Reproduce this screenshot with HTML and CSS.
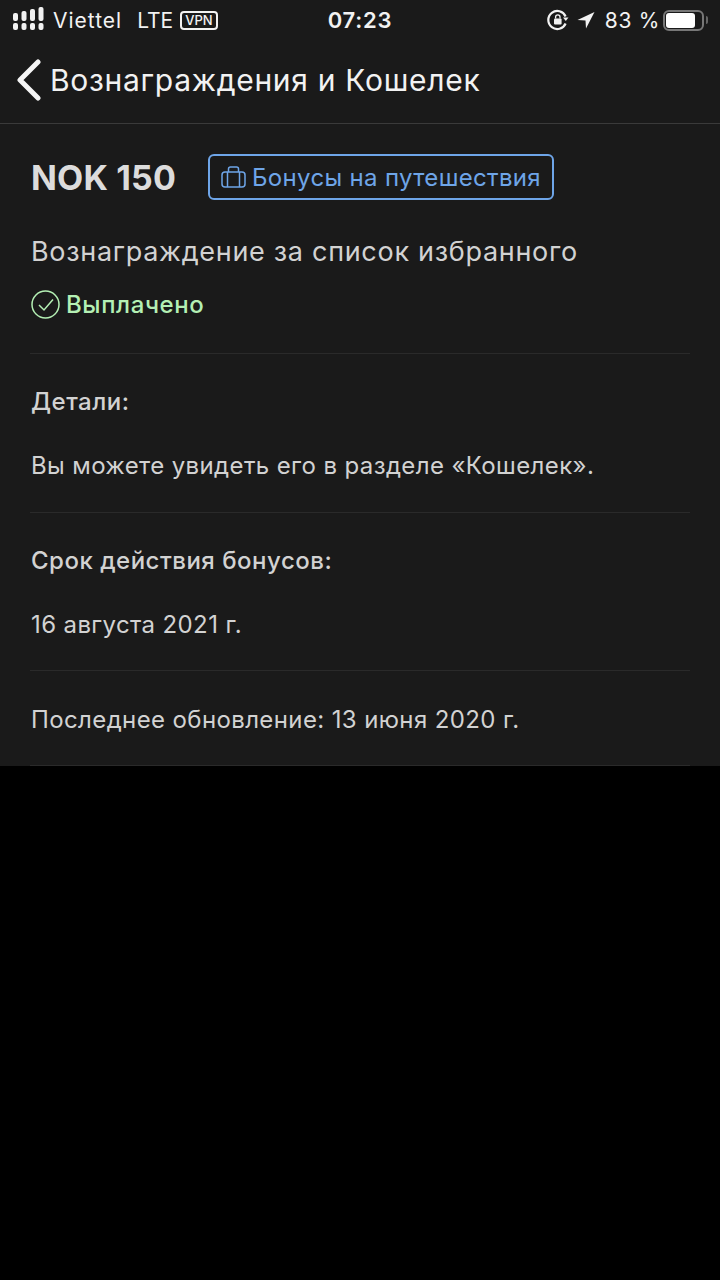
FILE: index.html
```html
<!DOCTYPE html>
<html lang="ru">
<head>
  <meta charset="UTF-8">
  <title>Вознаграждения и Кошелек</title>
  <link rel="stylesheet" href="styles.css">
</head>
<body>
  <div class="screen">
    <div class="status-bar">
      <div class="status-left">
        <svg class="signal" width="34" height="26" viewBox="0 0 34 26" fill="#f2f2f2">
          <rect x="1" y="6" width="5" height="8" rx="2"/>
          <rect x="9.500" y="4" width="5" height="10" rx="2"/>
          <rect x="18" y="2" width="5" height="12" rx="2"/>
          <rect x="26.500" y="0" width="5" height="14" rx="2"/>
          <rect x="1" y="16" width="5" height="7" rx="2"/>
          <rect x="9.500" y="16" width="5" height="7" rx="2"/>
          <rect x="18" y="16" width="5" height="7" rx="2"/>
          <rect x="26.500" y="16" width="5" height="7" rx="2"/>
        </svg>
        <span class="carrier">Viettel</span>
        <span class="network">LTE</span>
        <span class="vpn">VPN</span>
      </div>
      <div class="status-time">07:23</div>
      <div class="status-right">
        <svg width="22" height="22" viewBox="0 0 22 22" fill="none">
          <path d="M18.6 7.5A9 9 0 1 0 18.6 14.5" stroke="#f2f2f2" stroke-width="2.2"/>
          <path d="M16 8.5h5.5l-2.7 3.5z" fill="#f2f2f2"/>
          <rect x="7" y="9.5" width="7.6" height="6" rx="1" fill="#f2f2f2"/>
          <path d="M8.6 9.5V8a2.2 2.2 0 0 1 4.4 0v1.500" stroke="#f2f2f2" stroke-width="1.300"/>
        </svg>
        <svg class="arrow" width="18" height="20" viewBox="0 0 18 20">
          <path d="M17.500 2 .5 10l8 .5.500 8z" fill="#f2f2f2"/>
        </svg>
        <span class="percent">83 %</span>
        <div class="battery"><div class="battery-level"></div></div>
        <div class="battery-tip"></div>
      </div>
    </div>

    <div class="nav-bar">
      <svg class="back" width="26" height="42" viewBox="0 0 26 42" fill="none">
        <path d="M22 3 4 21l18 18" stroke="#f5f5f5" stroke-width="5" stroke-linecap="round" stroke-linejoin="round"/>
      </svg>
      <h1 class="nav-title">Вознаграждения и Кошелек</h1>
    </div>

    <div class="content">
      <section class="section section-head">
        <div class="amount-row">
          <span class="amount">NOK 150</span>
          <span class="tag">
            <svg width="25" height="22" viewBox="0 0 25 22" fill="none" stroke="#6ea5e8" stroke-width="1.500">
              <rect x="1" y="6" width="23" height="15" rx="3"/>
              <path d="M7.500 6V3A2 2 0 0 1 9.500 1h6a2 2 0 0 1 2 2v3M6.500 6v15M18.500 6v15"/>
            </svg>
            Бонусы на путешествия
          </span>
        </div>
        <div class="reward-name">Вознаграждение за список избранного</div>
        <div class="paid">
          <svg width="29" height="29" viewBox="0 0 29 29" fill="none" stroke="#b4f0b4" stroke-width="1.500">
            <circle cx="14.500" cy="14.500" r="13.500"/>
            <path d="m8 15 5 5 9-10.500"/>
          </svg>
          Выплачено
        </div>
      </section>

      <section class="section section-details">
        <div class="label">Детали:</div>
        <div class="value">Вы можете увидеть его в разделе «Кошелек».</div>
      </section>

      <section class="section">
        <div class="label">Срок действия бонусов:</div>
        <div class="value">16 августа 2021 г.</div>
      </section>

      <section class="section section-last">
        <div class="value">Последнее обновление: 13 июня 2020 г.</div>
      </section>
    </div>
  </div>
</body>
</html>
```

FILE: styles.css
```css
* { box-sizing: border-box; }
html, body { margin: 0; padding: 0; background: #000; }
body {
  font-family: Inter, "Noto Sans", sans-serif;
  width: 720px;
  height: 1280px;
  overflow: hidden;
}

.screen { background: #1a1a1a; }

.status-bar {
  height: 40px;
  display: grid;
  grid-template-columns: 1fr auto 1fr;
  align-items: center;
  padding: 0 12px;
  color: #f2f2f2;
  font-size: 21px;
}
.status-left, .status-right { display: flex; align-items: center; }
.status-right { justify-content: flex-end; }
.signal { margin-right: 7px; }
.carrier { letter-spacing: 1px; }
.network { margin-left: 15px; }
.vpn {
  margin-left: 7px;
  border: 2px solid #f2f2f2;
  border-radius: 4px;
  font-size: 13px;
  font-weight: 500;
  line-height: 15px;
  padding: 0 3px;
}
.status-time { font-weight: 600; font-size: 22px; letter-spacing: .8px; }
.arrow { margin-left: 8px; }
.percent { margin-left: 10px; letter-spacing: .7px; }
.battery {
  margin-left: 3px;
  width: 41px;
  height: 21px;
  border: 2px solid #777;
  border-radius: 6px;
  padding: 1px;
}
.battery-level { width: 29px; height: 100%; background: #fff; border-radius: 3px; }
.battery-tip {
  width: 2px;
  height: 8px;
  margin-left: 2px;
  background: #666;
  border-radius: 0 2px 2px 0;
}

.nav-bar {
  height: 84px;
  display: flex;
  align-items: center;
  padding: 0 0 3px 16px;
  border-bottom: 1px solid #3a3a3a;
}
.nav-title {
  margin: 0 0 0 8px;
  font-size: 30px;
  font-weight: 400;
  letter-spacing: .7px;
  color: #f2f2f2;
}

.content { padding: 0 30px; }
.section { border-bottom: 1px solid #2a2a2a; padding: 33px 1px 31px; }
.section-head { padding-top: 30px; height: 230px; }
.section-details { padding-bottom: 32px; }
.section-last { padding-top: 34px; padding-bottom: 31px; }

.amount-row { display: flex; align-items: center; }
.amount { font-size: 34px; font-weight: 700; letter-spacing: .15px; color: #dcdcdc; }
.tag {
  margin-left: 32px;
  height: 46px;
  display: flex;
  align-items: center;
  gap: 6px;
  padding: 0 11px;
  border: 2px solid #6ea5e8;
  border-radius: 6px;
  font-size: 24px;
  letter-spacing: .33px;
  color: #6ea5e8;
}
.reward-name { margin-top: 35px; font-size: 27px; letter-spacing: .7px; color: #d2d2d2; }
.paid {
  margin-top: 22px;
  display: flex;
  align-items: center;
  gap: 6px;
  font-size: 24px;
  font-weight: 500;
  letter-spacing: .6px;
  color: #b4f0b4;
}
.label { font-size: 24px; font-weight: 450; letter-spacing: .5px; color: #d2d2d2; }
.value { margin-top: 35px; font-size: 24px; letter-spacing: .38px; color: #d2d2d2; }
.section-last .value { margin-top: 0; }
```
